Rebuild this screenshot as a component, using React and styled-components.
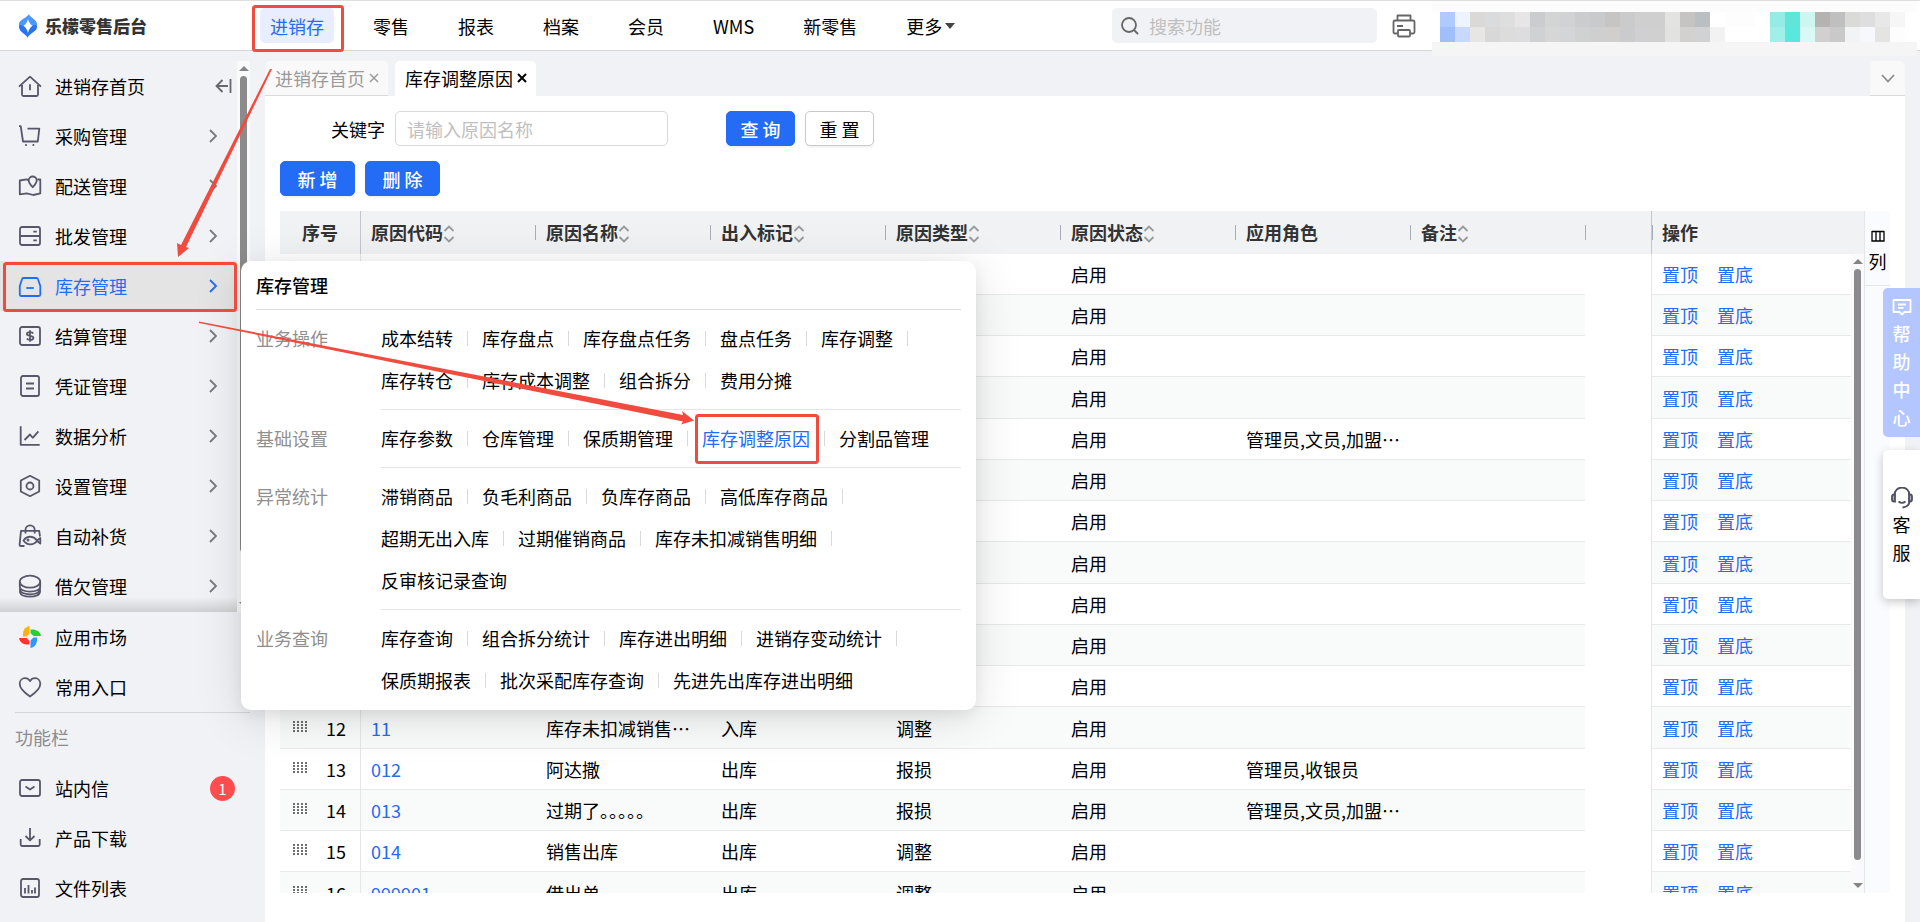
import React, { useState } from 'react'
import styled, { createGlobalStyle, css } from 'styled-components'

const GlobalStyle = createGlobalStyle`
    * { box-sizing: border-box; }
    body {
        margin: 0;
        background: #f1f2f5;
        color: #000;
        font-family: "Noto Sans CJK SC", "Noto Sans", sans-serif;
        font-size: 18px;
        line-height: 26px;
    }
    a { color: inherit; text-decoration: none; }
    button, input { font: inherit; color: inherit; }
    button { cursor: pointer; }
`

const Page = styled.div`
    position: relative;
    display: flex;
    flex-direction: column;
    height: 100vh;
    overflow: hidden;
`

// 顶部
const Header = styled.header`
    display: flex;
    align-items: center;
    flex: none;
    height: 51px;
    padding-left: 18px;
    background: #fff;
    border-top: 1px solid #dedede;
    border-bottom: 1px solid #d6d6d6;
`
const Brand = styled.a`
    display: flex;
    align-items: center;
    gap: 7px;
    width: 242px;
    color: #333;
    font-size: 17px;
    font-weight: 900;
    white-space: nowrap;
`
const TopNav = styled.nav`
    display: flex;
    gap: 29px;
    flex: 1;
`
const TopLink = styled.a`
    display: flex;
    align-items: center;
    height: 35px;
    padding: 0 10px;
    border-radius: 5px;
    white-space: nowrap;
    color: ${p => p.$active ? '#246bf5' : '#000'};
    background: ${p => p.$active ? '#e8eefd' : 'transparent'};
`
const Caret = styled.span`
    margin-left: 3px;
    border: 5px solid transparent;
    border-top: 6px solid #444;
    border-bottom: 0;
`
const SearchBox = styled.label`
    display: flex;
    align-items: center;
    gap: 10px;
    width: 265px;
    height: 35px;
    padding: 0 9px;
    border-radius: 5px;
    background: #f1f2f5;
`
const SearchInput = styled.input`
    flex: 1;
    min-width: 0;
    padding: 0;
    border: 0;
    outline: 0;
    background: transparent;
    &::placeholder { color: #bfbfbf; }
`
const PlainButton = styled.button`
    display: flex;
    align-items: center;
    justify-content: center;
    padding: 0;
    border: 0;
    background: transparent;
`
const PrintButton = styled(PlainButton)`
    margin: 0 16px 0 15px;
`
// 打码的账号信息
const Account = styled.div`
    display: grid;
    grid-template-columns: repeat(31, 15px);
    grid-auto-rows: 15px;
    align-self: flex-start;
    flex: none;
    margin-right: 3px;
    padding: 11px 12px 0 8px;
    height: 55px;
    background: linear-gradient(#fcfcfd 11px, #fff 11px, #fff 41px, #f5f5f6 41px);
`

// 主体
const Body = styled.div`
    display: flex;
    flex: 1;
    min-height: 0;
`
const Sidebar = styled.aside`
    display: flex;
    flex-direction: column;
    flex: none;
    width: 250px;
    padding-top: 10px;
`
const SideScroll = styled.div`
    display: flex;
    flex: none;
`
const SideList = styled.nav`
    flex: 1;
    padding-bottom: 1px;
    background: linear-gradient(transparent, #cfd0d2) 0 100% / 100% 15px no-repeat;
`
const SideItem = styled.a`
    display: flex;
    align-items: center;
    gap: 13px;
    height: 50px;
    padding: 0 19px 0 18px;
    color: ${p => p.$active ? '#246bf5' : '#000'};
    background: ${p => p.$active ? '#e4e4e5' : 'transparent'};
`
const SideText = styled.span`
    flex: 1;
`
const SideTitle = styled.div`
    height: 51px;
    margin-left: 15px;
    padding-top: 11px;
    border-top: 1px solid #d5d6d8;
    color: #8b8c8f;
`
const FoldIcon = styled.svg`
    margin-right: -14px;
`
const Badge = styled.span`
    width: 25px;
    margin-right: -4px;
    border-radius: 13px;
    background: #ff4d4f;
    color: #fff;
    font-size: 15px;
    line-height: 25px;
    text-align: center;
`
const ScrollTrack = styled.div`
    display: flex;
    flex-direction: column;
    align-items: center;
    justify-content: space-between;
    flex: none;
    width: 13px;
    padding: 5px 0;
    background: #fafafa;
`
const Thumb = styled.div`
    flex: 1;
    width: 7px;
    margin: 5px 0 ${p => p.$rest}px;
    border-radius: 4px;
    background: #8b8b8b;
`
const Arrow = styled.span`
    border: 5px solid transparent;
    ${p => p.$down ? css`
        border-top-color: #858585;
        border-bottom: 0;
    ` : css`
        border-bottom-color: #858585;
        border-top: 0;
    `}
`

const Main = styled.main`
    display: flex;
    flex-direction: column;
    flex: 1;
    min-width: 0;
    padding: 10px 15px 0;
`
const Tabs = styled.div`
    display: flex;
    gap: 7px;
    flex: none;
    height: 35px;
`
const Tab = styled.div`
    display: flex;
    align-items: center;
    gap: 4px;
    padding: 0 9px 0 10px;
    border-radius: 5px 5px 0 0;
    border-bottom: 1px solid ${p => p.$active ? '#fff' : '#d9d9d9'};
    background: ${p => p.$active ? '#fff' : '#f9f9fa'};
    color: ${p => p.$active ? '#000' : '#9b9b9b'};
    white-space: nowrap;
`
const TabMenu = styled(PlainButton)`
    width: 35px;
    margin-left: auto;
    border-radius: 5px 5px 0 0;
    border-bottom: 1px solid #d9d9d9;
    background: #f9f9fa;
`
const Panel = styled.section`
    display: flex;
    flex-direction: column;
    gap: 15px;
    flex: 1;
    min-height: 0;
    padding: 15px 15px 29px;
    background: #fff;
`
const Query = styled.form`
    display: flex;
    align-items: center;
    gap: 10px;
    flex: none;
    padding-left: 51px;
`
const TextField = styled.input`
    width: 273px;
    height: 35px;
    margin-right: 48px;
    padding: 0 11px;
    border: 1px solid #d9d9d9;
    border-radius: 5px;
    outline: 0;
    &::placeholder { color: #bfbfbf; }
`
const Button = styled.button`
    width: ${p => p.$wide ? 75 : 69}px;
    height: 35px;
    padding: 0;
    border: 1px solid ${p => p.$primary ? '#246bf5' : '#c9c9c9'};
    border-radius: 5px;
    background: ${p => p.$primary ? '#246bf5' : '#fff'};
    color: ${p => p.$primary ? '#fff' : '#000'};
    font-weight: ${p => p.$primary ? 500 : 400};
    line-height: 26px;
    box-shadow: 0 2px 2px rgba(0, 0, 0, 0.05);
`
const Actions = styled.div`
    display: flex;
    gap: 10px;
    flex: none;
`

// 表格
const TableArea = styled.div`
    display: flex;
    flex: 1;
    min-height: 0;
`
const TableClip = styled.div`
    position: relative;
    flex: 1;
    min-width: 0;
    overflow: hidden;
`
const BodyScroll = styled(ScrollTrack)`
    position: absolute;
    top: 43px;
    right: 0;
    bottom: 0;
`
const Table = styled.table`
    width: 100%;
    table-layout: fixed;
    border-spacing: 0;
`
const Th = styled.th`
    height: 43px;
    padding: 0 0 2px ${p => p.$center ? 0 : p.$line ? 10 : 11}px;
    background: #f0f2f4;
    ${p => p.$mark && css`
        background: linear-gradient(#a9adb9, #a9adb9) 0 50% / 1px 15px no-repeat #f0f2f4;
    `}
    ${p => p.$line && css`
        border-left: 1px solid #c3c6cd;
    `}
    color: #333;
    font-weight: 700;
    text-align: ${p => p.$center ? 'center' : 'left'};
    white-space: nowrap;
    svg { vertical-align: -3px; }
`
const Td = styled.td`
    height: 41px;
    padding: 0 0 0 11px;
    border-bottom: 1px solid #e8e9ea;
    white-space: nowrap;
    ${p => p.$line && css`
        padding-left: 10px;
        border-left: 1px solid #e5e6e8;
    `}
    a { color: #246bf5; }
    a + a { margin-left: 19px; }
`
const Blank = styled.td`
    background: #fff;
`
const Tr = styled.tr`
    &:nth-child(even) { background: #f9fbfb; }
    &:nth-child(4n) ${Td} { height: 42px; }
`
const Order = styled.div`
    display: flex;
    align-items: center;
    justify-content: space-between;
    padding: 0 14px 0 2px;
`
const ColumnPanel = styled.div`
    flex: none;
    width: 26px;
    border-left: 1px solid #e4e6e9;
    background: #f9fbfe;
`
const ColumnButton = styled(PlainButton)`
    flex-direction: column;
    gap: 6px;
    width: 100%;
    height: 75px;
    padding-top: 8px;
    border-bottom: 1px solid #e4e6e9;
`

// 库存管理弹出菜单
const Flyout = styled.div`
    position: absolute;
    top: 261px;
    left: 241px;
    width: 735px;
    padding: 0 15px 8px;
    border-radius: 10px;
    background: #fff;
    box-shadow: 0 5px 15px rgba(0, 0, 0, 0.07), 0 8px 50px rgba(0, 0, 0, 0.12);
`
const FlyoutTitle = styled.h2`
    margin: 0;
    padding: 11px 0;
    border-bottom: 1px solid #dcdcdc;
    font-size: 18px;
    font-weight: 500;
    line-height: 26px;
`
const Group = styled.section`
    display: flex;
`
const GroupName = styled.h3`
    width: 125px;
    margin: 0;
    padding-top: 7px;
    color: #8f8f8f;
    font-size: 18px;
    font-weight: 400;
    line-height: 42px;
`
const GroupRows = styled.div`
    flex: 1;
    padding-top: 7px;
    ${Group}:not(:last-child) & {
        padding-bottom: 8px;
        border-bottom: 1px solid #e6e6e6;
    }
    ${Group}:last-child & {
        padding-bottom: 1px;
    }
`
const GroupRow = styled.div`
    display: flex;
    align-items: center;
    height: 42px;
`
const FlyoutLink = styled.a`
    color: ${p => p.$active ? '#246bf5' : '#000'};
    white-space: nowrap;
`
const Split = styled.span`
    width: 1px;
    height: 15px;
    margin: 0 14px;
    background: #d9d9d9;
`

// 右侧悬浮
const Floats = styled.div`
    position: absolute;
    top: 288px;
    right: 0;
    display: flex;
    flex-direction: column;
    gap: 13px;
`
const FloatButton = styled.button`
    display: flex;
    flex-direction: column;
    align-items: center;
    width: 37px;
    height: 149px;
    padding: ${p => p.$help ? 10 : 37}px 0 0;
    border: 0;
    border-radius: 5px 0 0 5px;
    background: ${p => p.$help ? '#b3c6ff' : '#fff'};
    color: ${p => p.$help ? '#fff' : '#000'};
    font-weight: ${p => p.$help ? 500 : 400};
    line-height: 28px;
    box-shadow: ${p => p.$help ? 'none' : '0 3px 10px rgba(0, 0, 0, 0.22)'};
    svg { flex: none; margin-bottom: ${p => p.$help ? 3 : 1}px; }
`

const Marks = styled.svg`
    position: absolute;
    top: 0;
    left: 0;
    pointer-events: none;
`

const sideIcons = {
    home: <><path d="M1 12.7 12 2.7l11 10M4 11v9.5c0 1 .5 1.5 1.5 1.5h13c1 0 1.500-.5 1.500-1.500V11" /><path d="M12 10.3v6" /></>,
    cart: <><path d="M1 2.2h1.700L5 17.500h14.800L21.300 4.700H9.500" /><path d="M7.200 21h1.600M14.600 21h1.600" strokeWidth="2" /></>,
    map: <><path d="M10.500 6.200 8.300 5.300 1.800 6.500v13.800l7-1 6.500 1.700 7-1.600V5.500h-3" /><path d="M14.700 13.200c-2.300-2.400-4-4.300-4-6.700a4 4 0 0 1 8 0c0 2.400-1.700 4.300-4 6.700z" /></>,
    server: <><rect x="2" y="3" width="20" height="18" rx="2" /><path d="M2 12h20M15.300 7.700h3.500M15.300 16.400h3.500" /></>,
    box: <><path d="M5.500 4h13c.8 0 1.300.4 1.500 1.200l2.300 6.800v8.500c0 1-.5 1.500-1.500 1.500H3.300c-1 0-1.500-.5-1.500-1.500V12L4 5.200C4.200 4.400 4.700 4 5.500 4z" /><path d="M8.300 14h7.500" /></>,
    money: <><rect x="2" y="3" width="20" height="18" rx="2" /><path d="M15.300 9.500c-.7-.9-1.700-1.300-3.200-1.300-2 0-3.200.7-3.200 1.900 0 2.600 6.500 1.100 6.500 3.800 0 1.200-1.300 1.900-3.300 1.900-1.600 0-2.700-.5-3.300-1.400M12 6.300v11.400" /></>,
    doc: <><rect x="3" y="2" width="18" height="20" rx="2" /><path d="M8 9.500h8M8 14.500h8" /></>,
    chart: <path d="M2.700 2.300v18.500h19M6.500 16l5.500-5.500 2.700 3.300 5.700-6.500" />,
    hex: <><path d="M12 1.800 21.200 6.500v11L12 22.200 2.800 17.500v-11z" /><circle cx="12" cy="12" r="3.5" /></>,
    bag: <><path d="M6.500 22H2.700c-.8 0-1.200-.5-1.100-1.300L3 6.800h18.200l.8 5.700M7.500 9.500V6a4.600 4.600 0 0 1 9.200 0v3.500" /><path d="M5.500 16.500c3.500-5 9.700-5 13.500 0l3.300-2.500v5.500L19 17c-3.800 4.800-10 4.500-13.500-.5z" /><circle cx="10" cy="16" r=".6" /></>,
    coins: <><ellipse cx="12" cy="7.7" rx="10.2" ry="6" /><path d="M1.800 8v4.500c0 3.200 4.500 5.200 10.200 5.200s10.200-2 10.200-5.200V8M2 12.500v2.800c0 3.200 4.500 5 10 5s10-1.800 10-5v-2.800M2 15.500v2.200c0 3.200 4.500 5 10 5s10-1.800 10-5v-2.200" /></>,
    heart: <path d="M12 21.500C7.500 18.500 1.700 14.500 1.700 8.800c0-3.300 2.400-5.600 5.200-5.600 2.200 0 4 1 5.100 2.900 1.100-1.900 2.900-2.900 5.100-2.900 2.800 0 5.200 2.300 5.200 5.600 0 5.700-5.800 9.700-10.300 12.700z" />,
    mail: <><rect x="2" y="4" width="20" height="16" rx="2" /><path d="m7.500 10.500 4.500 3 4.500-3" /></>,
    download: <path d="M12 2v12M7.500 10l4.500 4.300 4.500-4.300M2.700 13v5.500c0 1 .5 1.500 1.500 1.500h16c1 0 1.500-.5 1.500-1.500V13" />,
    report: <><rect x="3" y="3" width="18" height="18" rx="2" /><path d="M7 12v5.500M10.500 9v8.500M14 14v3.500M17 11.500v6" /></>,
}

const SideIcon = ({ name, color }) => {
    if (name === 'market') {
        return (
            <svg width="24" height="24" viewBox="0 0 24 24">
                <path d="M11.500 1v7.500l-3 3H5C4.500 6 6.500 2 11.500 1z" fill="#ffb400" />
                <path d="M23 11h-7.500l-3-3V4.500C18 4 22 6 23 11z" fill="#24d12f" />
                <path d="M12.500 23v-7.500l3-3H19c.5 5.500-1.500 9.500-6.500 10.500z" fill="#3296fa" />
                <path d="M1 13h7.500l3 3v3.500C6 20 2 18 1 13z" fill="#ff3333" />
            </svg>
        )
    }
    return (
        <svg width="24" height="24" viewBox="0 0 24 24" fill="none" stroke={color || '#565869'} strokeWidth="1.8" strokeLinejoin="round">
            {sideIcons[name]}
        </svg>
    )
}

const Logo = () => (
    <svg width="20" height="26" viewBox="0 0 20 26">
        <path d="M11 1c0 3 8 5.500 8 10 0 1.500-.5 2.500-1.500 2.500-3.500 0-6.500-3-7.500-7.500-1 4.500-4 7.500-7.500 7.500C1.500 13.500 1 12.500 1 11c0-4.500 7.500-5.500 10-10z" fill="#4a97ff" />
        <path d="M9.500 25c0-3-8.500-6-8.500-11 0-1.500.5-2 1.500-2C6 12 9 15.500 10 20c1-4.500 4-8 7.500-8 1 0 1.500.5 1.500 2 0 5-8 6-9.500 11z" fill="#2a74f0" />
    </svg>
)

const Chevron = ({ color = '#77797f' }) => (
    <svg width="9" height="14" viewBox="0 0 9 14" fill="none" stroke={color} strokeWidth="1.8"><path d="m1 1 6 6-6 6" /></svg>
)

const Close = ({ bold }) => (
    <svg width="10" height="10" viewBox="0 0 10 10" fill="none" stroke="currentColor" strokeWidth={bold ? 2 : 1.5}><path d="m1 1 8 8M9 1 1 9" /></svg>
)

const SortIcon = () => (
    <svg width="12" height="18" viewBox="0 0 12 18" fill="none" stroke="#9a9a9a" strokeWidth="1.8"><path d="m1.500 6 4.500-4.500L10.500 6M1.500 12 6 16.500l4.500-4.500" /></svg>
)

const DragIcon = () => (
    <svg width="14" height="18" viewBox="0 0 14 18" stroke="#222" strokeWidth="1.3" strokeDasharray="2 1"><path d="M1 2v11M5 2v11M9 2v11M13 2v11" /></svg>
)

const topMenus = ['进销存', '零售', '报表', '档案', '会员', 'WMS', '新零售', '更多']

const sideMenus = [
    ['home', '进销存首页'],
    ['cart', '采购管理'],
    ['map', '配送管理'],
    ['server', '批发管理'],
    ['box', '库存管理'],
    ['money', '结算管理'],
    ['doc', '凭证管理'],
    ['chart', '数据分析'],
    ['hex', '设置管理'],
    ['bag', '自动补货'],
    ['coins', '借欠管理'],
]

const tools = [
    ['mail', '站内信', 1],
    ['download', '产品下载'],
    ['report', '文件列表'],
]

const groups = [
    { name: '业务操作', rows: [['成本结转', '库存盘点', '库存盘点任务', '盘点任务', '库存调整'], ['库存转仓', '库存成本调整', '组合拆分', '费用分摊']] },
    { name: '基础设置', rows: [['库存参数', '仓库管理', '保质期管理', '库存调整原因', '分割品管理']] },
    { name: '异常统计', rows: [['滞销商品', '负毛利商品', '负库存商品', '高低库存商品'], ['超期无出入库', '过期催销商品', '库存未扣减销售明细'], ['反审核记录查询']] },
    { name: '业务查询', rows: [['库存查询', '组合拆分统计', '库存进出明细', '进销存变动统计'], ['保质期报表', '批次采配库存查询', '先进先出库存进出明细']] },
]

const columns = [
    { title: '原因代码', sort: true },
    { title: '原因名称', sort: true },
    { title: '出入标记', sort: true },
    { title: '原因类型', sort: true },
    { title: '原因状态', sort: true },
    { title: '应用角色' },
    { title: '备注', sort: true },
]

const rows = [
    {}, {}, {}, {},
    { role: '管理员,文员,加盟…' },
    {}, {}, {}, {}, {}, {},
    { code: '11', name: '库存未扣减销售…', mark: '入库', type: '调整' },
    { code: '012', name: '阿达撒', mark: '出库', type: '报损', role: '管理员,收银员' },
    { code: '013', name: '过期了。。。。。', mark: '出库', type: '报损', role: '管理员,文员,加盟…' },
    { code: '014', name: '销售出库', mark: '出库', type: '调整' },
    { code: '999901', name: '借出单', mark: '出库', type: '调整' },
]

const mosaic = [
    '#afcaff #eef4ff #dad9d8 #dadbdc #dededf #e7e5e5 #cbcccd #d3d4d4 #d1d2d3 #cbcccd #c9cacb #c7c5c4 #cbcbcc #cfcfcf #cfcfcf #e3e3e1 #c5c4c3 #b9bfc3 #fff #fdfdfd #fdfdfd #fff #94ece5 #60e6d9 #cef6f1 #b5b3b2 #bfbfbf #dadad9 #dedede #e8e8e8 #f6f6f6',
    '#9fbefa #c9d9fd #e8e6e5 #d8d8d9 #dcdcdd #dddddf #d0d1d2 #d6d6d7 #d4d5d6 #d0d1d1 #cfcfd0 #d1cfcd #cbcbcd #d0d0d2 #d0d0d1 #e2e2e0 #d2d1d0 #d1d2d4 #f2f2f2 #fff #fff #fff #a0efe8 #58e8dc #d9f9f6 #d1cfcf #c9c9c9 #f2f3f5 #f7f8fb #e4e4e3 #fdfdfd',
].join(' ').split(' ')

function App() {
    const [keyword, setKeyword] = useState('')

    return (
        <Page>
            <GlobalStyle />
            <Header>
                <Brand href="#"><Logo />乐檬零售后台</Brand>
                <TopNav>
                    {topMenus.map((name, i) => (
                        <TopLink href="#" key={name} $active={i === 0}>
                            {name}
                            {name === '更多' && <Caret />}
                        </TopLink>
                    ))}
                </TopNav>
                <SearchBox>
                    <svg width="18" height="18" viewBox="0 0 18 18" fill="none" stroke="#666" strokeWidth="1.8"><circle cx="8" cy="8" r="7" /><path d="m13 13 4 4" /></svg>
                    <SearchInput placeholder="搜索功能" aria-label="搜索功能" />
                </SearchBox>
                <PrintButton aria-label="打印">
                    <svg width="24" height="24" viewBox="0 0 24 24" fill="none" stroke="#666" strokeWidth="1.8" strokeLinejoin="round">
                        <path d="M5.500 6.500V1.500h13v5M5.500 19.500H3c-1 0-1.500-.5-1.500-1.500V8c0-1 .5-1.500 1.500-1.500h18c1 0 1.500.5 1.500 1.500v10c0 1-.5 1.500-1.500 1.500h-2.500M5 12h6" />
                        <rect x="6" y="16" width="12" height="6.5" rx="1" />
                    </svg>
                </PrintButton>
                <Account>
                    {mosaic.map((color, i) => <span key={i} style={{ background: color }} />)}
                </Account>
            </Header>

            <Body>
                <Sidebar>
                    <SideScroll>
                        <SideList>
                            {sideMenus.map(([icon, name]) => {
                                const active = name === '库存管理'
                                return (
                                    <SideItem href="#" key={name} $active={active}>
                                        <SideIcon name={icon} color={active && '#246bf5'} />
                                        <SideText>{name}</SideText>
                                        {icon === 'home'
                                            ? <FoldIcon width="17" height="14" viewBox="0 0 17 14" fill="none" stroke="#66686e" strokeWidth="1.8"><path d="M7.500 1 1.500 7l6 6M1.500 7H13M15.500 0v14" /></FoldIcon>
                                            : <Chevron color={active ? '#246bf5' : undefined} />}
                                    </SideItem>
                                )
                            })}
                        </SideList>
                        <ScrollTrack>
                            <Arrow />
                            <Thumb $rest={50} />
                            <Arrow $down />
                        </ScrollTrack>
                    </SideScroll>
                    <SideItem href="#"><SideIcon name="market" /><SideText>应用市场</SideText></SideItem>
                    <SideItem href="#"><SideIcon name="heart" /><SideText>常用入口</SideText></SideItem>
                    <SideTitle>功能栏</SideTitle>
                    {tools.map(([icon, name, count]) => (
                        <SideItem href="#" key={name}>
                            <SideIcon name={icon} />
                            <SideText>{name}</SideText>
                            {count && <Badge>{count}</Badge>}
                        </SideItem>
                    ))}
                </Sidebar>

                <Main>
                    <Tabs>
                        <Tab>进销存首页<PlainButton aria-label="关闭"><Close /></PlainButton></Tab>
                        <Tab $active>库存调整原因<PlainButton aria-label="关闭"><Close bold /></PlainButton></Tab>
                        <TabMenu aria-label="更多标签">
                            <svg width="14" height="9" viewBox="0 0 14 9" fill="none" stroke="#8c8c8c" strokeWidth="1.8"><path d="m1 1 6 6.500L13 1" /></svg>
                        </TabMenu>
                    </Tabs>
                    <Panel>
                        <Query onSubmit={e => e.preventDefault()}>
                            <label htmlFor="keyword">关键字</label>
                            <TextField id="keyword" placeholder="请输入原因名称" value={keyword} onChange={e => setKeyword(e.target.value)} />
                            <Button $primary type="submit">查 询</Button>
                            <Button type="button" onClick={() => setKeyword('')}>重 置</Button>
                        </Query>
                        <Actions>
                            <Button $primary $wide>新 增</Button>
                            <Button $primary $wide>删 除</Button>
                        </Actions>
                        <TableArea>
                            <TableClip>
                                <Table>
                                    <colgroup>
                                        <col width="80" />
                                        {columns.map(c => <col key={c.title} width="175" />)}
                                        <col />
                                        <col width="200" />
                                        <col width="13" />
                                    </colgroup>
                                    <thead>
                                        <tr>
                                            <Th $center>序号</Th>
                                            {columns.map((c, i) => (
                                                <Th key={c.title} $line={i === 0} $mark={i > 0}>{c.title}{c.sort && <SortIcon />}</Th>
                                            ))}
                                            <Th $mark />
                                            <Th $line $mark>操作</Th>
                                            <Th />
                                        </tr>
                                    </thead>
                                    <tbody>
                                        {rows.map((row, i) => (
                                            <Tr key={i}>
                                                <Td><Order><DragIcon />{i + 1}</Order></Td>
                                                <Td $line>{row.code && <a href="#">{row.code}</a>}</Td>
                                                <Td>{row.name}</Td>
                                                <Td>{row.mark}</Td>
                                                <Td>{row.type}</Td>
                                                <Td>启用</Td>
                                                <Td>{row.role}</Td>
                                                <Td />
                                                <Blank />
                                                <Td $line><a href="#">置顶</a><a href="#">置底</a></Td>
                                                <Blank />
                                            </Tr>
                                        ))}
                                    </tbody>
                                </Table>
                                <BodyScroll>
                                    <Arrow />
                                    <Thumb $rest={23} />
                                    <Arrow $down />
                                </BodyScroll>
                            </TableClip>
                            <ColumnPanel>
                                <ColumnButton>
                                    <svg width="14" height="12" viewBox="0 0 14 12" fill="none" stroke="#000" strokeWidth="1.3"><path d="M1 1.500h12M1 1v10h12V1M5 2v9M9 2v9" /></svg>
                                    列
                                </ColumnButton>
                            </ColumnPanel>
                        </TableArea>
                    </Panel>
                </Main>
            </Body>

            <Flyout>
                <FlyoutTitle>库存管理</FlyoutTitle>
                {groups.map(group => (
                    <Group key={group.name}>
                        <GroupName>{group.name}</GroupName>
                        <GroupRows>
                            {group.rows.map((names, r) => (
                                <GroupRow key={r}>
                                    {names.map((name, i) => (
                                        <React.Fragment key={name}>
                                            <FlyoutLink href="#" $active={name === '库存调整原因'}>{name}</FlyoutLink>
                                            {(i < names.length - 1 || r < group.rows.length - 1) && <Split />}
                                        </React.Fragment>
                                    ))}
                                </GroupRow>
                            ))}
                        </GroupRows>
                    </Group>
                ))}
            </Flyout>

            <Floats>
                <FloatButton $help>
                    <svg width="20" height="18" viewBox="0 0 20 18" fill="none" stroke="#fff" strokeWidth="1.8" strokeLinejoin="round"><path d="M1.500 2h17v12h-6L10 16.500 7.500 14h-6zM6 6.500h8M6 9.800h5.500" /></svg>
                    <span>帮</span><span>助</span><span>中</span><span>心</span>
                </FloatButton>
                <FloatButton>
                    <svg width="22" height="22" viewBox="0 0 22 22" fill="none" stroke="#4f5160" strokeWidth="1.8"><path d="M3.500 8a7.500 7.500 0 0 1 15 0v6c0 3.500-2.500 6-7 6.500M7.500 14.500c2 1.500 5 1.500 7 0" /><path d="M4 7.500H3c-1.300 0-2 .8-2 2v3c0 1.200.7 2 2 2h1zM18 7.500h1c1.300 0 2 .8 2 2v3c0 1.200-.7 2-2 2h-1z" fill="#a9aab3" /></svg>
                    <span>客</span><span>服</span>
                </FloatButton>
            </Floats>

            <Marks width="1000" height="500" viewBox="0 0 1000 500">
                <g fill="none" stroke="#f14a3e" strokeWidth="3">
                    <rect x="253.5" y="6.5" width="89" height="44" rx="2" />
                    <rect x="4.5" y="263.5" width="231" height="47" rx="2" />
                    <rect x="696.5" y="415.5" width="121" height="47" rx="2" />
                </g>
                <g fill="#f14a3e">
                    <path d="M270 69h2l-86 178 3 1-11 9-1-14 4 2z" />
                    <path d="m199 321.500 484 93.500-1-4 12 9.500-13 4 2-3L199 323z" />
                </g>
            </Marks>
        </Page>
    )
}

export default App
